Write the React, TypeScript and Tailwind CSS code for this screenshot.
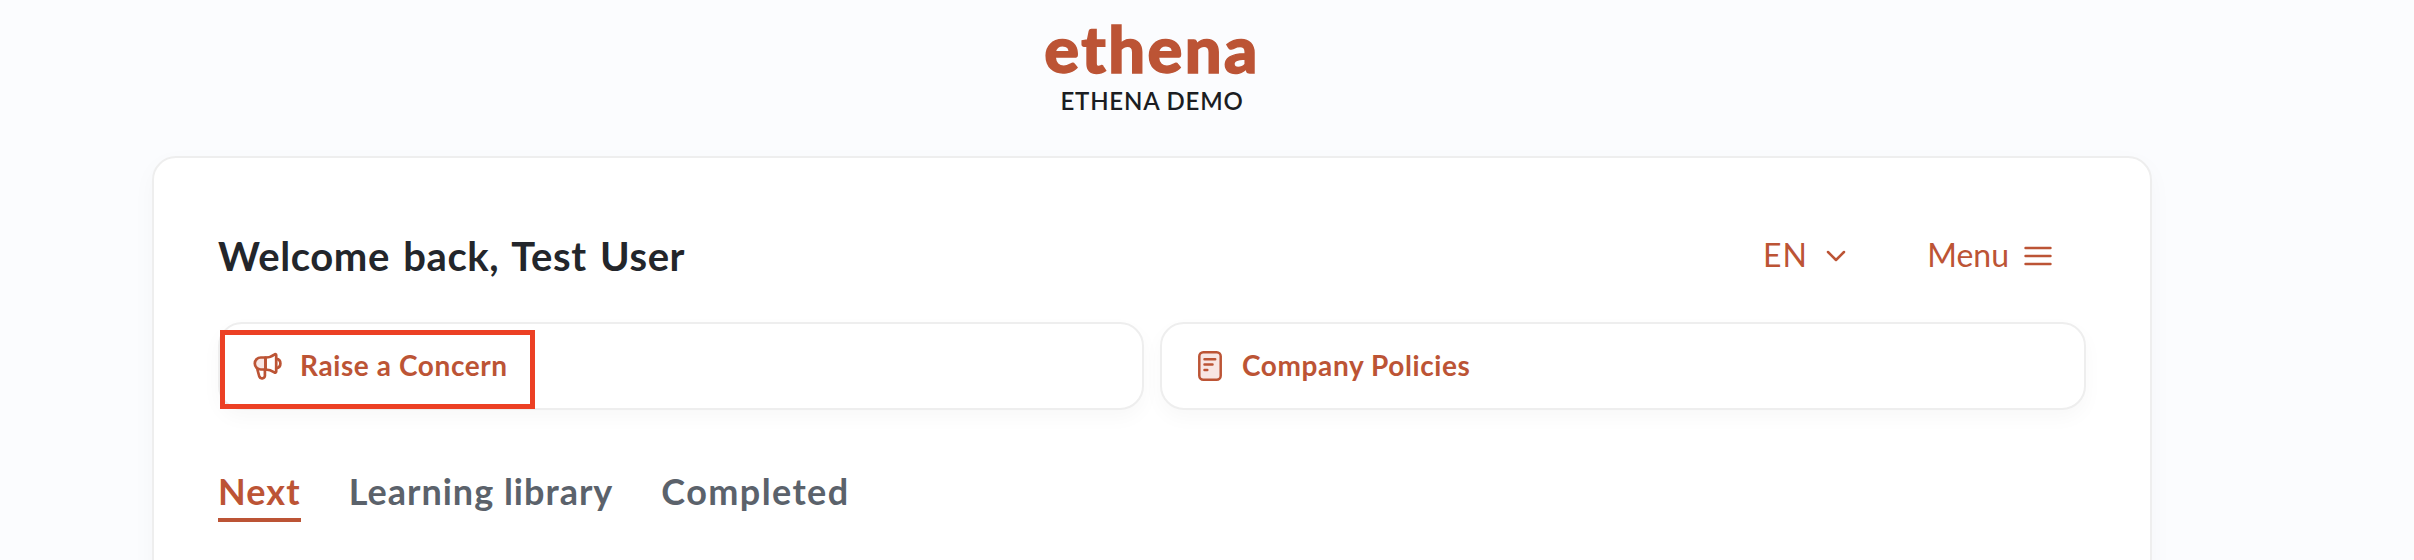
const tabs = [
  { label: "Next", tracking: "tracking-[1.1px]", active: true },
  { label: "Learning library", tracking: "tracking-[1px]", active: false },
  { label: "Completed", tracking: "tracking-[1.4px]", active: false },
];

function MegaphoneIcon() {
  return (
    <svg
      width="32"
      height="32"
      viewBox="0 0 32 32"
      fill="none"
      stroke="currentColor"
      strokeWidth="2.7"
      strokeLinecap="round"
      strokeLinejoin="round"
    >
      <path d="M13.5 7.5H8.800a6 6 0 0 0 0 12h4.700z" className="fill-[#f8e6e4]" />
      <path d="M13.500 7.500c3.800 0 6.700-1.200 8.900-3 .9-.6 1.800-.2 1.800.8v16.200c0 1-.9 1.500-1.800.9-2.400-1.700-5.200-2.900-8.900-2.900z" />
      <path d="M24.200 8.800c2.600.2 4.200 2.100 4.200 4.700s-1.600 4.400-4.200 4.700" />
      <path d="M5.400 19.500l1.900 7a2.900 2.900 0 0 0 5.600-.6v-6.400" />
    </svg>
  );
}

function PolicyIcon() {
  return (
    <svg
      width="24"
      height="30"
      viewBox="0 0 24 30"
      fill="none"
      stroke="currentColor"
      strokeWidth="2.5"
      strokeLinecap="round"
    >
      <rect
        x="1.3"
        y="1.3"
        width="21.4"
        height="27.4"
        rx="4"
        className="fill-[#f8e6e4]"
      />
      <path d="M6.500 8.200h10.700M6.500 13.600h8M6.500 19h2.800" />
    </svg>
  );
}

export default function App() {
  return (
    <div className="h-[560px] w-full overflow-hidden bg-[#fbfcfe] font-['Lato',sans-serif]">
      <div className="ml-[152px] w-[2000px]">
        <header className="flex h-[156px] flex-col items-center pt-[11px]">
          <div className="h-[76px] text-[65px] leading-[74px] font-black tracking-[2.4px] text-[#bc5435] [-webkit-text-stroke:1.5px_#bc5435]">
            ethena
          </div>
          <div className="text-2xl leading-[28px] font-semibold tracking-[0.8px] text-[#1b1d22]">
            ETHENA DEMO
          </div>
        </header>

        <main className="h-[460px] rounded-t-3xl border-2 border-[#eeeeee] bg-white px-16 pt-[68px] shadow-[0_8px_24px_rgba(0,0,0,0.03)]">
          <div className="flex h-[60px] items-center justify-between pr-[34px]">
            <h1 className="text-[40px] leading-[60px] font-bold tracking-[0.6px] text-[#23262b] [word-spacing:3px]">
              Welcome back, Test User
            </h1>
            <div className="flex items-center text-[32px] text-[#bc5435]">
              <button className="flex items-center gap-[18px]">
                <span className="pb-[2px] tracking-[1.2px]">EN</span>
                <svg
                  width="20"
                  height="12"
                  viewBox="0 0 20 12"
                  fill="none"
                  stroke="currentColor"
                  strokeWidth="2.5"
                  strokeLinecap="round"
                  strokeLinejoin="round"
                >
                  <path d="M2 2l8 8 8-8" />
                </svg>
              </button>
              <button className="ml-[81px] flex items-center gap-[15px]">
                <span className="pb-[2px]">Menu</span>
                <svg
                  width="28"
                  height="20"
                  viewBox="0 0 28 20"
                  stroke="currentColor"
                  strokeWidth="2.4"
                  strokeLinecap="round"
                >
                  <path d="M1.500 2h25M1.500 10h25M1.500 18h25" />
                </svg>
              </button>
            </div>
          </div>

          <div className="mt-9 grid grid-cols-2 gap-4 text-[28px] font-bold tracking-[0.6px] text-[#bc5435] [word-spacing:3px]">
            <button className="relative flex h-[88px] items-center rounded-3xl border-2 border-[#eeeeee] bg-white pl-8 shadow-[0_8px_20px_rgba(0,0,0,0.03)]">
              <MegaphoneIcon />
              <span className="ml-4 pb-[2px]">Raise a Concern</span>
              <span className="absolute top-[6px] left-0 h-[79px] w-[315px] border-[5px] border-[#ec4024]" />
            </button>
            <button className="flex h-[88px] items-center rounded-3xl border-2 border-[#eeeeee] bg-white pl-9 shadow-[0_8px_20px_rgba(0,0,0,0.03)]">
              <PolicyIcon />
              <span className="ml-5 pb-[2px]">Company Policies</span>
            </button>
          </div>

          <nav className="mt-[56px] flex gap-12 text-4xl font-bold">
            {tabs.map((tab) => (
              <a
                key={tab.label}
                className={`h-[56px] leading-[50px] ${tab.tracking} ${
                  tab.active
                    ? "border-b-4 border-[#bc5435] text-[#bc5435]"
                    : "text-[#5b626b]"
                }`}
              >
                {tab.label}
              </a>
            ))}
          </nav>
        </main>
      </div>
    </div>
  );
}
